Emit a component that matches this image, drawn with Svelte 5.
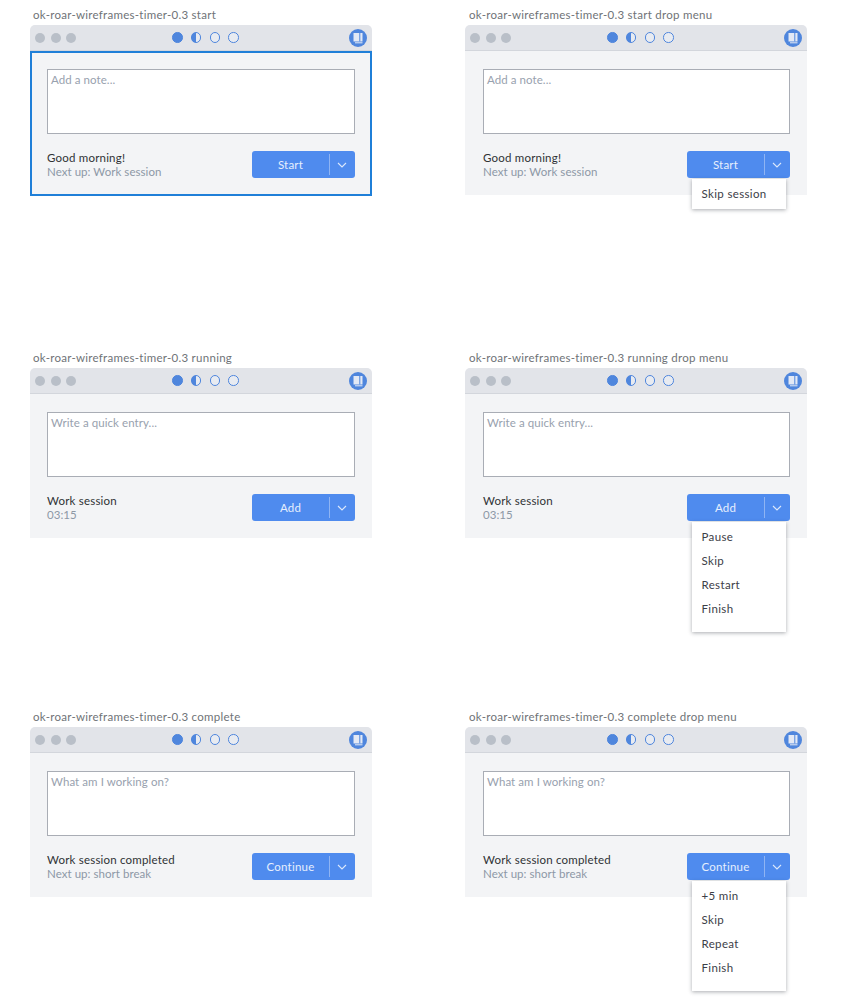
<script>
  const windows = [
    { name: 'start', placeholder: 'Add a note...', title: 'Good morning!', sub: 'Next up: Work session', action: 'Start', focused: true },
    { name: 'start drop menu', placeholder: 'Add a note...', title: 'Good morning!', sub: 'Next up: Work session', action: 'Start', menu: ['Skip session'] },
    { name: 'running', placeholder: 'Write a quick entry...', title: 'Work session', sub: '03:15', action: 'Add' },
    { name: 'running drop menu', placeholder: 'Write a quick entry...', title: 'Work session', sub: '03:15', action: 'Add', menu: ['Pause', 'Skip', 'Restart', 'Finish'] },
    { name: 'complete', placeholder: 'What am I working on?', title: 'Work session completed', sub: 'Next up: short break', action: 'Continue' },
    { name: 'complete drop menu', placeholder: 'What am I working on?', title: 'Work session completed', sub: 'Next up: short break', action: 'Continue', menu: ['+5 min', 'Skip', 'Repeat', 'Finish'] },
  ];
</script>

<div class="board">
  {#each windows as win}
    <section class="frame">
      <div class="label">ok-roar-wireframes-timer-0.3 {win.name}</div>
      <div class="window">
        <header class="titlebar">
          <div class="traffic">
            <span></span><span></span><span></span>
          </div>
          <div class="steps">
            <i class="step full"></i>
            <i class="step half"></i>
            <i class="step"></i>
            <i class="step"></i>
          </div>
          <svg class="journal" width="18" height="18" viewBox="0 0 18 18" aria-hidden="true">
            <circle cx="9" cy="9" r="9" fill="#4f86dd" />
            <path d="M4.5 4h9v8.5h-9z" fill="#e3e9f5" />
            <path d="M10.8 4v8.5" stroke="#4f86dd" stroke-width="1" />
            <path d="M6 13.8h7.5" stroke="#e3e9f5" stroke-width="1" />
          </svg>
        </header>
        <div class="body" class:focused={win.focused}>
          <textarea placeholder={win.placeholder}></textarea>
          <div class="footer">
            <div class="status">
              <div class="status-title">{win.title}</div>
              <div class="status-sub">{win.sub}</div>
            </div>
            <div class="split">
              <button type="button" class="main">{win.action}</button>
              <button type="button" class="caret" aria-label="More">
                <svg width="10" height="6" viewBox="0 0 10 6"><path d="M1 1l4 4 4-4" fill="none" stroke="#dce8fb" stroke-width="1.1" /></svg>
              </button>
              {#if win.menu}
                <ul class="menu" class:single={win.menu.length === 1}>
                  {#each win.menu as item}
                    <li>{item}</li>
                  {/each}
                </ul>
              {/if}
            </div>
          </div>
        </div>
      </div>
    </section>
  {/each}
</div>

<style>
  :global(body) {
    background: #fff;
    font-family: Lato, "Open Sans", sans-serif;
  }

  .board {
    display: grid;
    grid-template-columns: 342px 342px;
    grid-template-rows: 343px 359px 280px;
    column-gap: 93px;
    padding: 8px 0 0 30px;
    height: 1000px;
    box-sizing: border-box;
  }

  .label {
    height: 17px;
    padding-left: 3px;
    font-size: 11.5px;
    line-height: 14px;
    letter-spacing: 0.27px;
    color: #6f7377;
  }

  .frame:nth-child(even) .label {
    padding-left: 4px;
  }

  .window {
    width: 342px;
  }

  .titlebar {
    height: 26px;
    background: #e2e4e9;
    border-radius: 5px 5px 0 0;
    display: grid;
    grid-template-columns: 1fr auto 1fr;
    align-items: center;
    padding: 0 5px;
    box-sizing: border-box;
    border-bottom: 1px solid #d3d6dc;
  }

  .traffic {
    display: flex;
    gap: 5.5px;
  }

  .traffic span {
    width: 10px;
    height: 10px;
    border-radius: 50%;
    background: #b9bfc8;
  }

  .steps {
    display: flex;
    gap: 8.2px;
    margin-left: 9px;
  }

  .step {
    width: 10.5px;
    height: 10.5px;
    border-radius: 50%;
    border: 1px solid #4f86dd;
    box-sizing: border-box;
    background: #e8ebf1;
  }

  .step.full {
    background: #4f86dd;
  }

  .step.half {
    background: linear-gradient(90deg, #4f86dd 50%, #e8ebf1 50%);
  }

  .journal {
    justify-self: end;
  }

  .body {
    height: 144px;
    background: #f3f4f6;
    padding: 18px 17px 0;
    box-sizing: border-box;
  }

  .frame:nth-child(even) .body {
    padding-left: 18px;
  }

  .body.focused {
    box-shadow: inset 0 0 0 2px #1f7fd8;
    height: 145px;
  }

  textarea {
    display: block;
    width: 100%;
    height: 65px;
    box-sizing: border-box;
    border: 1px solid #a9adb5;
    border-radius: 0;
    background: #fff;
    padding: 3px 3px;
    margin: 0;
    resize: none;
    font-family: inherit;
    font-size: 11.5px;
    letter-spacing: 0.07px;
  }

  textarea::placeholder {
    color: #98a1ae;
    opacity: 1;
  }

  .footer {
    display: flex;
    justify-content: space-between;
    margin-top: 17px;
  }

  .status {
    font-size: 11.5px;
    line-height: 14px;
    letter-spacing: 0.2px;
  }

  .status-title {
    color: #2f3235;
  }

  .status-sub {
    color: #8d98a6;
    letter-spacing: 0.05px;
  }

  .split {
    position: relative;
    display: flex;
    width: 103px;
    height: 27px;
    background: #4f8bee;
    border-radius: 3px;
  }

  .split button {
    border: 0;
    background: none;
    padding: 0;
    color: #e6effd;
    font-family: inherit;
    font-size: 11.5px;
    letter-spacing: 0.2px;
  }

  .main {
    flex: 1;
  }

  .caret {
    position: relative;
    width: 26px;
    display: flex;
    align-items: center;
    justify-content: center;
  }

  .caret::before {
    content: '';
    position: absolute;
    left: 0;
    top: 3px;
    bottom: 3px;
    width: 1px;
    background: #8fb4f3;
  }

  .menu {
    position: absolute;
    z-index: 2;
    top: 28px;
    left: 4.5px;
    width: 94px;
    margin: 0;
    padding: 3px 0 11px;
    list-style: none;
    background: #fff;
    box-shadow: 0 1px 4px rgba(40, 45, 55, 0.4);
  }

  .menu.single {
    padding-bottom: 3px;
  }

  .menu li {
    height: 24px;
    padding-left: 10px;
    font-size: 11.5px;
    line-height: 24px;
    letter-spacing: 0.35px;
    color: #3c4047;
  }
</style>
